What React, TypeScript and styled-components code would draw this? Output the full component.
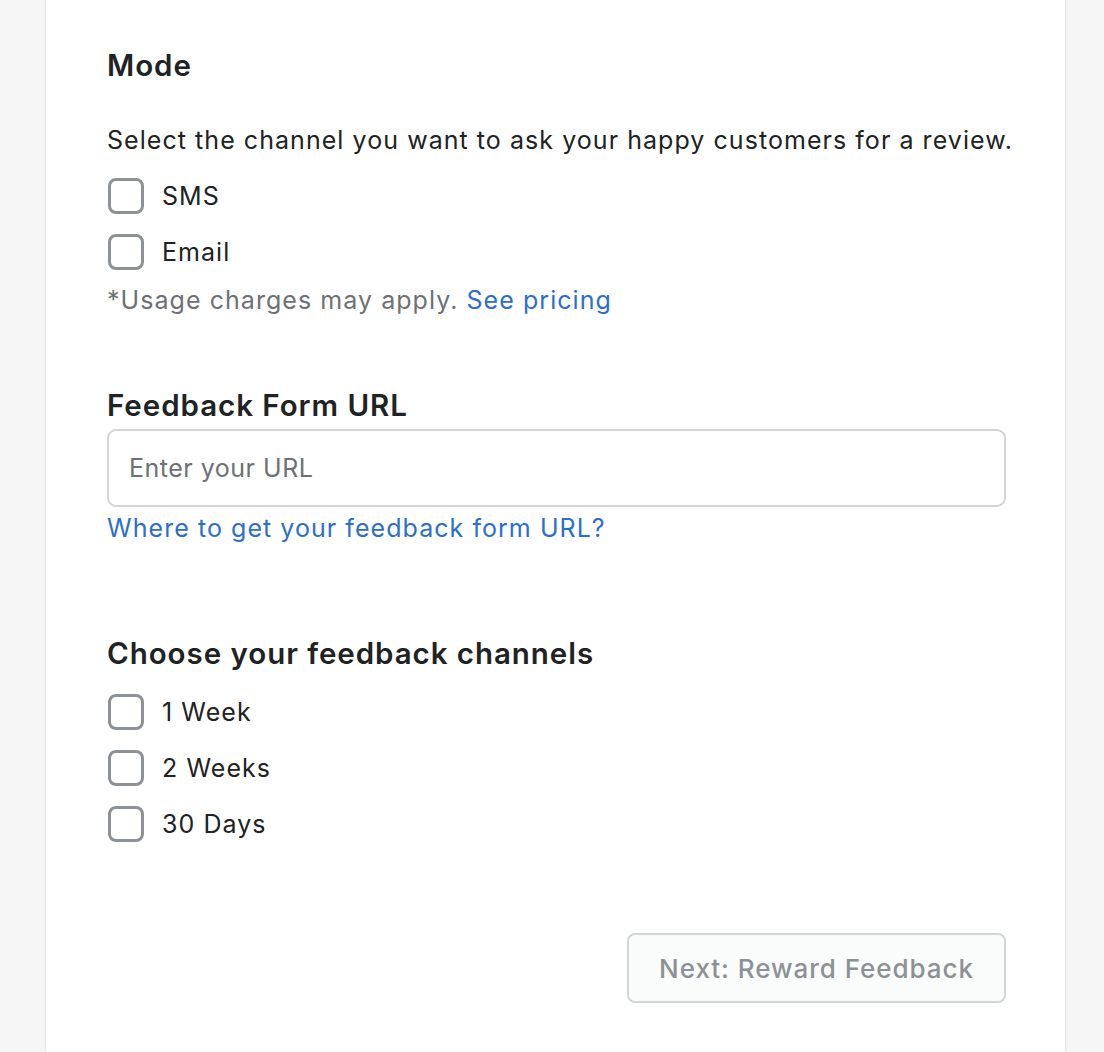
import React from "react";
import styled, { createGlobalStyle } from "styled-components";

const Global = createGlobalStyle`
  html, body { margin: 0; padding: 0; background: #f6f6f7; }
  body { font-family: Inter, "Noto Sans", "Liberation Sans", sans-serif; color: #202223; }
  * { box-sizing: border-box; }
`;

const Page = styled.div`
  min-height: 1052px;
  display: flex;
`;

const Card = styled.div`
  margin-left: 45px;
  width: 1021px;
  min-height: 1052px;
  background: #ffffff;
  border-left: 1px solid #e4e5e7;
  border-right: 1px solid #e4e5e7;
  box-shadow: 0 0 2px rgba(0, 0, 0, 0.06);
  padding: 47px 60px 40px 61px;
  display: flex;
  flex-direction: column;
`;

const Heading = styled.h2<{ $mt?: number }>`
  margin: ${(p) => p.$mt ?? 0}px 0 0;
  font-size: 29.5px;
  line-height: 36px;
  font-weight: 600;
  letter-spacing: 0.95px;
  color: #202223;
`;

const Text = styled.p<{ $mt?: number; $muted?: boolean }>`
  margin: ${(p) => p.$mt ?? 0}px 0 0;
  font-size: 25px;
  line-height: 32px;
  font-weight: 400;
  letter-spacing: 1.05px;
  white-space: nowrap;
  color: ${(p) => (p.$muted ? "#6d7175" : "#202223")};
`;

const Link = styled.a`
  color: #2c6ecb;
  text-decoration: none;
  cursor: pointer;
`;

const LinkLine = styled.a`
  display: block;
  margin-top: 5px;
  font-size: 25px;
  line-height: 32px;
  letter-spacing: 1.05px;
  color: #2c6ecb;
  text-decoration: none;
`;

const CheckList = styled.div<{ $mt: number }>`
  margin-top: ${(p) => p.$mt}px;
  display: flex;
  flex-direction: column;
  gap: 20px;
`;

const CheckRow = styled.label`
  display: flex;
  align-items: center;
  gap: 18px;
  height: 36px;
  font-size: 25px;
  line-height: 32px;
  letter-spacing: 1.05px;
  color: #202223;
  cursor: pointer;
`;

const Box = styled.span`
  width: 36px;
  height: 36px;
  margin-left: 1px;
  border: 3px solid #8c9196;
  border-radius: 8px;
  background: #fff;
  flex: none;
`;

const Input = styled.input`
  margin-top: 6px;
  width: 899px;
  height: 78px;
  border: 2px solid #d2d5d8;
  border-radius: 9px;
  padding: 0 20px;
  font-family: inherit;
  font-size: 25px;
  letter-spacing: 0.5px;
  color: #202223;
  outline: none;
  &::placeholder { color: #6d7175; }
`;

const Footer = styled.div`
  margin-top: 91px;
  display: flex;
  justify-content: flex-end;
  width: 899px;
`;

const Button = styled.button`
  width: 379px;
  height: 70px;
  background: #fafbfb;
  border: 2px solid #d2d5d8;
  border-radius: 8px;
  font-family: inherit;
  font-size: 26px;
  font-weight: 500;
  letter-spacing: 0.95px;
  color: #8c9196;
  cursor: not-allowed;
`;

const Check = ({ label }: { label: string }) => (
  <CheckRow>
    <Box />
    {label}
  </CheckRow>
);

export default function App() {
  return (
    <>
      <Global />
      <Page>
        <Card>
          <Heading>Mode</Heading>
          <Text $mt={41}>Select the channel you want to ask your happy customers for a review.</Text>
          <CheckList $mt={22}>
            <Check label="SMS" />
            <Check label="Email" />
          </CheckList>
          <Text $mt={14} $muted>
            *Usage charges may apply. <Link>See pricing</Link>
          </Text>
          <Heading $mt={71}>Feedback Form URL</Heading>
          <Input placeholder="Enter your URL" />
          <LinkLine>Where to get your feedback form URL?</LinkLine>
          <Heading $mt={91}>Choose your feedback channels</Heading>
          <CheckList $mt={23}>
            <Check label="1 Week" />
            <Check label="2 Weeks" />
            <Check label="30 Days" />
          </CheckList>
          <Footer>
            <Button disabled>Next: Reward Feedback</Button>
          </Footer>
        </Card>
      </Page>
    </>
  );
}
